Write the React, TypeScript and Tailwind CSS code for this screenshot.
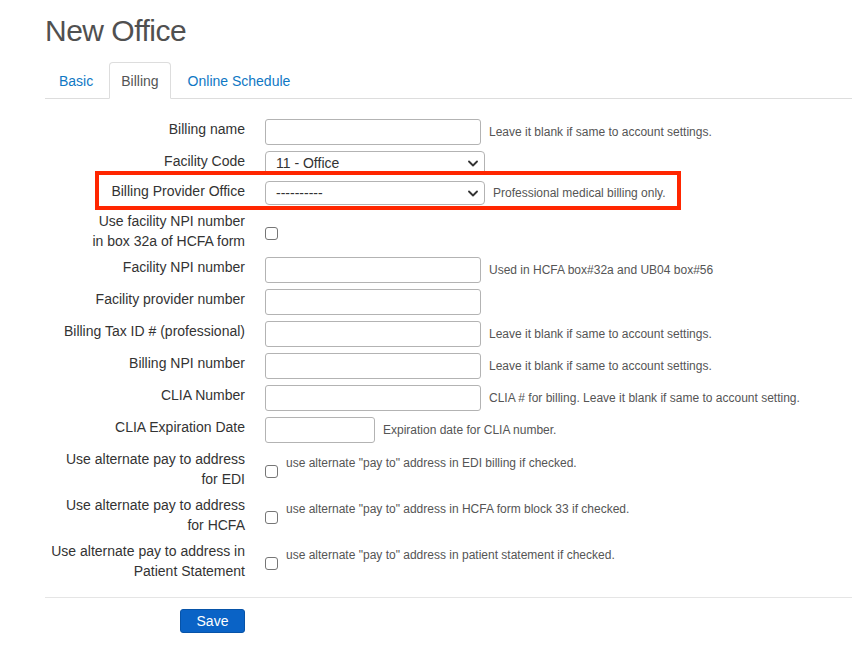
import React from 'react';

type Row =
  | { kind: 'input'; label: React.ReactNode; help?: string; width?: string }
  | { kind: 'select'; label: React.ReactNode; value: string; help?: string }
  | { kind: 'check'; label: React.ReactNode; help?: string };

const rows: Row[] = [
  { kind: 'input', label: 'Billing name', help: 'Leave it blank if same to account settings.' },
  { kind: 'select', label: 'Facility Code', value: '11 - Office' },
  { kind: 'select', label: 'Billing Provider Office', value: '----------', help: 'Professional medical billing only.' },
  { kind: 'check', label: (<>Use facility NPI number<br />in box 32a of HCFA form</>) },
  { kind: 'input', label: 'Facility NPI number', help: 'Used in HCFA box#32a and UB04 box#56' },
  { kind: 'input', label: 'Facility provider number' },
  { kind: 'input', label: 'Billing Tax ID # (professional)', help: 'Leave it blank if same to account settings.' },
  { kind: 'input', label: 'Billing NPI number', help: 'Leave it blank if same to account settings.' },
  { kind: 'input', label: 'CLIA Number', help: 'CLIA # for billing. Leave it blank if same to account setting.' },
  { kind: 'input', label: 'CLIA Expiration Date', help: 'Expiration date for CLIA number.', width: 'w-[110px]' },
  {
    kind: 'check',
    label: (<>Use alternate pay to address<br />for EDI</>),
    help: 'use alternate "pay to" address in EDI billing if checked.',
  },
  {
    kind: 'check',
    label: (<>Use alternate pay to address<br />for HCFA</>),
    help: 'use alternate "pay to" address in HCFA form block 33 if checked.',
  },
  {
    kind: 'check',
    label: (<>Use alternate pay to address in<br />Patient Statement</>),
    help: 'use alternate "pay to" address in patient statement if checked.',
  },
];

function Chevron() {
  return (
    <svg width="10" height="7" viewBox="0 0 10 7" className="shrink-0">
      <path d="M1 1.5 L5 5.5 L9 1.5" fill="none" stroke="#333" strokeWidth="1.8" strokeLinecap="round" strokeLinejoin="round" />
    </svg>
  );
}

function FormRow({ row }: { row: Row }) {
  return (
    <div className="flex mb-[6px]">
      <div className="w-[200px] shrink-0 text-right text-[14px] leading-5 text-[#333]">{row.label}</div>
      <div className="ml-5 flex">
        {row.kind === 'input' && (
          <div className="flex items-center">
            <div className={`${row.width ?? 'w-[216px]'} h-[26px] border border-[#b3b3b3] rounded-[3px] bg-white`} />
            {row.help && <span className="ml-2 text-[12px] text-[#555]">{row.help}</span>}
          </div>
        )}
        {row.kind === 'select' && (
          <div className="flex items-center">
            <div className="w-[220px] h-[24px] border border-[#b3b3b3] rounded-[4px] bg-white flex items-center justify-between pl-[10px] pr-[6px] text-[14px] text-[#333]">
              <span>{row.value}</span>
              <Chevron />
            </div>
            {row.help && <span className="ml-2 text-[12px] text-[#555]">{row.help}</span>}
          </div>
        )}
        {row.kind === 'check' && (
          <div className="flex items-start h-10">
            <span className="mt-[16px] block w-[13px] h-[13px] border border-[#767676] rounded-[3px] bg-white shrink-0" />
            {row.help && <span className="ml-2 mt-[7px] text-[12px] leading-[14px] text-[#555]">{row.help}</span>}
          </div>
        )}
      </div>
    </div>
  );
}

export default function App() {
  return (
    <div className="relative min-h-[650px] bg-white pl-[45px] font-['Liberation_Sans',Arial,sans-serif]">
      <h1 className="pt-[13px] text-[30px] leading-[36px] tracking-[-0.5px] font-normal text-[#505050]">New Office</h1>

      {/* Tabs */}
      <ul className="mt-[13px] flex border-b border-[#ddd] text-[14px]">
        <li className="-mb-px">
          <span className="block px-[13px] pt-[8px] pb-[7px] leading-5 border border-transparent text-[#0f78c4]">Basic</span>
        </li>
        <li className="-mb-px ml-[2px]">
          <span className="block px-[11px] pt-[8px] pb-[7px] leading-5 border border-[#ddd] border-b-white rounded-t-[4px] bg-white text-[#555]">
            Billing
          </span>
        </li>
        <li className="-mb-px ml-[2px]">
          <span className="block px-[14px] pt-[8px] pb-[7px] leading-5 border border-transparent text-[#0f78c4]">Online Schedule</span>
        </li>
      </ul>

      {/* Form */}
      <div className="pt-5">
        {rows.map((row, i) => (
          <FormRow key={i} row={row} />
        ))}
      </div>

      <div className="mt-[16px] border-t border-[#e5e5e5]" />

      <div className="w-[200px] flex justify-end mt-[11px]">
        <button className="h-[24px] w-[65px] rounded-[3px] border border-[#0753a8] bg-[#0a63c6] text-white text-[14px] leading-5">
          Save
        </button>
      </div>

      {/* annotation box */}
      <div className="absolute left-[95px] top-[171px] w-[586px] h-[39px] border-4 border-[#ff2600] pointer-events-none" />
    </div>
  );
}
